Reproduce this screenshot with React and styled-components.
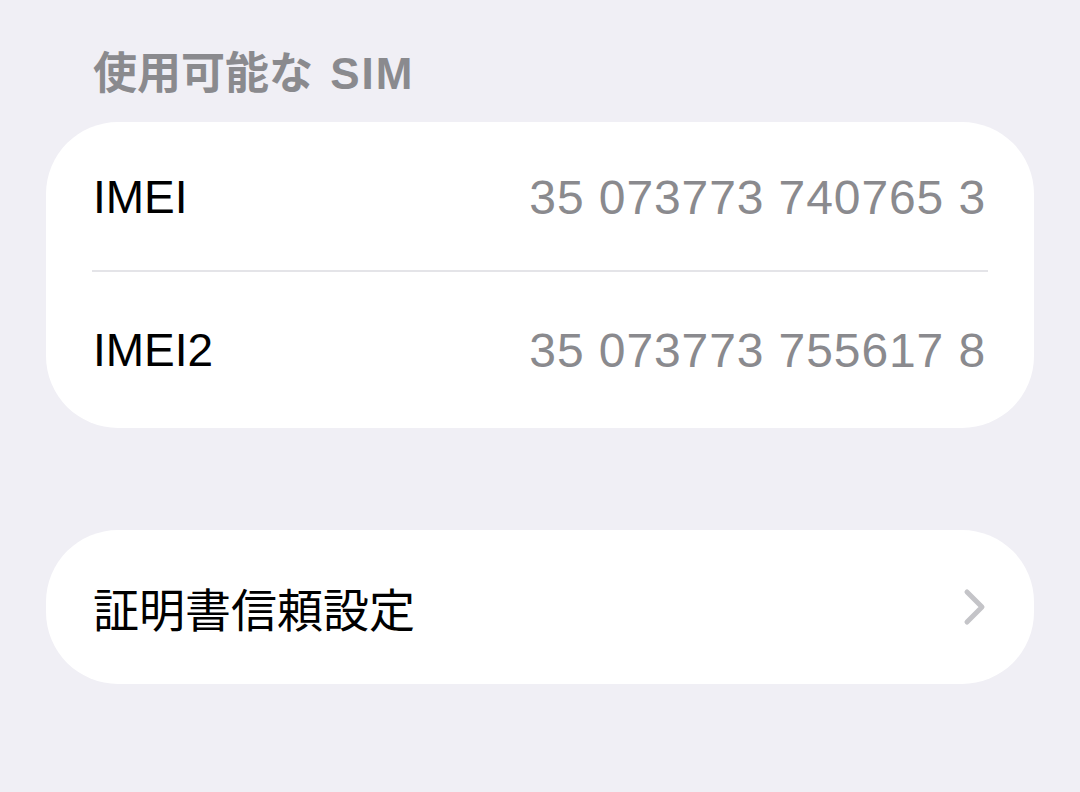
import React from 'react';
import styled, { createGlobalStyle } from 'styled-components';

const GlobalStyle = createGlobalStyle`
	html, body {
		margin: 0;
		padding: 0;
		background: #f0eff5;
	}
	body {
		font-family: "Liberation Sans", "Noto Sans CJK JP", sans-serif;
		-webkit-font-smoothing: antialiased;
	}
`;

const rows = [
	{ label: 'IMEI', value: '35 073773 740765 3' },
	{ label: 'IMEI2', value: '35 073773 755617 8' },
];

const App = () => (
	<Page>
		<GlobalStyle />
		<SectionTitle>
			使用可能な <Latin>SIM</Latin>
		</SectionTitle>
		<Group>
			{rows.map((row, i) => (
				<Row key={row.label} $divider={i < rows.length - 1} $height={i === 0 ? 150 : 156}>
					<Label>{row.label}</Label>
					<Value>{row.value}</Value>
				</Row>
			))}
		</Group>
		<Group $spaced>
			<Row $height={154}>
				<Label>証明書信頼設定</Label>
				<Chevron width="26" height="38" viewBox="0 0 26 38">
					<path
						d="M5 4 L20 19 L5 34"
						fill="none"
						stroke="#c4c4c8"
						strokeWidth="5"
						strokeLinecap="round"
						strokeLinejoin="round"
					/>
				</Chevron>
			</Row>
		</Group>
	</Page>
);

export default App;

const Page = styled.div`
	min-height: 792px;
	padding: 48px 46px 0;
	box-sizing: border-box;
	background: #f0eff5;
`;

const SectionTitle = styled.h3`
	margin: 0 0 22px 47px;
	font-family: "Liberation Sans", "Noto Sans CJK JP", sans-serif;
	font-size: 44px;
	line-height: 52px;
	font-weight: 700;
	color: #8a8a8e;
	word-spacing: 5px;
`;

const Latin = styled.span`
	letter-spacing: 2px;
`;

const Group = styled.div`
	background: #ffffff;
	border-radius: 72px;
	margin-top: ${({ $spaced }) => ($spaced ? '102px' : '0')};
	overflow: hidden;
`;

const Row = styled.div`
	position: relative;
	display: flex;
	align-items: center;
	justify-content: space-between;
	height: ${({ $height }) => $height}px;
	padding: 0 48px 0 47px;
	box-sizing: border-box;

	${({ $divider }) =>
		$divider &&
		`
		&::after {
			content: '';
			position: absolute;
			left: 46px;
			right: 46px;
			bottom: 0;
			height: 2px;
			background: #e4e4e8;
		}
	`}
`;

const Label = styled.span`
	font-size: 46px;
	color: #000000;
	font-family: "Liberation Sans", "Noto Sans CJK JP", sans-serif;
`;

const Value = styled.span`
	font-size: 48px;
	letter-spacing: 0.9px;
	color: #8a8a8e;
	font-family: "Liberation Sans", sans-serif;
`;

const Chevron = styled.svg`
	display: block;
	margin-right: -2px;
`;
